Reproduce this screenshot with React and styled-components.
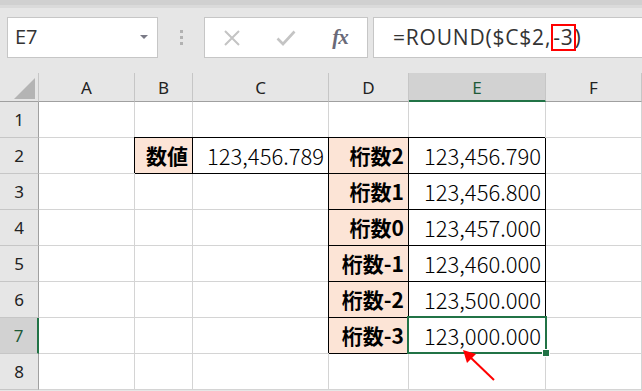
import React from "react";
import styled, { createGlobalStyle } from "styled-components";

const GlobalStyle = createGlobalStyle`
  html, body {
    margin: 0;
    padding: 0;
    background: #ffffff;
    overflow: hidden;
  }
`;

const COLS = ["A", "B", "C", "D", "E", "F"];
const WIDTHS = "39px 96px 58px 136px 80px 137px 1fr";

const rows = {
  2: { B: "数値", C: "123,456.789", D: "桁数2", E: "123,456.790" },
  3: { D: "桁数1", E: "123,456.800" },
  4: { D: "桁数0", E: "123,457.000" },
  5: { D: "桁数-1", E: "123,460.000" },
  6: { D: "桁数-2", E: "123,500.000" },
  7: { D: "桁数-3", E: "123,000.000" },
};

const labelCols = ["B", "D"];

const Page = styled.div`
  width: 642px;
  height: 391px;
  background: #e6e6e6;
  font-family: "Noto Sans", "Open Sans", sans-serif;
`;

const TopStrip = styled.div`
  height: 5px;
  background: #d0d0d0;
  border-bottom: 3px solid #dadada;
`;

const FormulaRow = styled.div`
  display: flex;
  align-items: flex-start;
  height: 65px;
  padding: 9px 0 0 7px;
  box-sizing: border-box;
`;

const NameBox = styled.div`
  width: 151px;
  height: 41px;
  box-sizing: border-box;
  background: #fff;
  border: 1px solid #c6c6c6;
  display: flex;
  align-items: center;
  justify-content: space-between;
  padding: 0 9px 2px 7px;
  font-family: "Open Sans", "Noto Sans", sans-serif;
  font-size: 20px;
  color: #333;
`;

const DropArrow = styled.span`
  width: 0;
  height: 0;
  border-left: 4px solid transparent;
  border-right: 4px solid transparent;
  border-top: 4px solid #7a7a86;
  margin-top: 1px;
`;

const Grip = styled.div`
  width: 46px;
  height: 41px;
  display: flex;
  flex-direction: column;
  align-items: center;
  justify-content: center;
  gap: 3px;
  span {
    width: 3px;
    height: 3px;
    background: #b2b2b2;
  }
`;

const ButtonBox = styled.div`
  width: 164px;
  height: 41px;
  box-sizing: border-box;
  background: #fff;
  border: 1px solid #c6c6c6;
  display: flex;
  align-items: center;
  padding-left: 0;
`;

const IconSlot = styled.div`
  width: 55px;
  display: flex;
  justify-content: center;
  align-items: center;
`;

const Fx = styled.span`
  font-family: "Liberation Serif", "DejaVu Serif", serif;
  font-style: italic;
  font-weight: bold;
  font-size: 21px;
  color: #6a6a78;
  letter-spacing: -1px;
`;

const FormulaBox = styled.div`
  flex: 1;
  height: 41px;
  margin-left: 5px;
  box-sizing: border-box;
  background: #fff;
  border: 1px solid #c6c6c6;
  border-right: none;
  display: flex;
  align-items: center;
  padding: 0 0 1px 19px;
  font-family: "Open Sans", "Noto Sans", sans-serif;
  font-size: 21px;
  color: #333;
  letter-spacing: 0.8px;
`;

const Mark = styled.span`
  display: inline-block;
  border: 2px solid #ff0000;
  line-height: 23px;
  padding: 0;
  margin: 0 -1px 0 0;
`;

const SheetWrap = styled.div`
  position: relative;
`;

const Sheet = styled.div`
  display: grid;
  grid-template-columns: ${WIDTHS};
  grid-template-rows: 29px repeat(8, 36px);
  background: #fff;
`;

const Corner = styled.div`
  background: #e6e6e6;
  border-right: 1px solid #c6c6c6;
  border-bottom: 1px solid #a0a0a0;
  display: flex;
  align-items: flex-end;
  justify-content: flex-end;
  padding: 0 3px 2px 0;
  svg {
    display: block;
  }
`;

const ColHead = styled.div`
  background: ${(p) => (p.$active ? "#d2d2d2" : "#e6e6e6")};
  border-right: 1px solid #c6c6c6;
  border-bottom: ${(p) => (p.$active ? "2px solid #217346" : "1px solid #a0a0a0")};
  display: flex;
  align-items: center;
  justify-content: center;
  font-size: 17px;
  color: ${(p) => (p.$active ? "#1e5a38" : "#222")};
  padding-top: ${(p) => (p.$active ? "1px" : "0")};
`;

const RowHead = styled.div`
  background: ${(p) => (p.$active ? "#d2d2d2" : "#e6e6e6")};
  border-right: ${(p) => (p.$active ? "2px solid #217346" : "1px solid #a0a0a0")};
  border-bottom: 1px solid #c6c6c6;
  display: flex;
  align-items: center;
  justify-content: center;
  font-size: 17px;
  color: ${(p) => (p.$active ? "#1e5a38" : "#222")};
`;

const Cell = styled.div`
  position: relative;
  z-index: ${(p) => (p.$selected ? 2 : "auto")};
  border-right: 1px solid ${(p) => (p.$boxed ? "#000" : "#d4d4d4")};
  border-bottom: 1px solid ${(p) => (p.$boxed ? "#000" : "#d4d4d4")};
  box-shadow: ${(p) => (p.$boxed ? "-1px -1px 0 #000" : "none")};
  background: ${(p) => (p.$label ? "#fce4d6" : "#fff")};
  display: flex;
  align-items: center;
  justify-content: flex-end;
  padding: 0 4px 1px 0;
  font-family: "Noto Sans CJK JP", "Noto Sans", sans-serif;
  font-size: ${(p) => (p.$label ? "21px" : "22px")};
  font-weight: ${(p) => (p.$label ? 700 : 300)};
  color: #000;
  white-space: nowrap;
`;

const Selection = styled.div`
  position: absolute;
  left: -2px;
  top: -2px;
  right: -2px;
  bottom: -1px;
  border: 2px solid #217346;
  pointer-events: none;
`;

const Handle = styled.div`
  position: absolute;
  right: -5px;
  bottom: -5px;
  width: 6px;
  height: 6px;
  background: #217346;
  border: 1px solid #fff;
`;

const Arrow = styled.svg`
  position: absolute;
  left: 455px;
  top: 269px;
  z-index: 3;
  overflow: visible;
`;

export default function App() {
  return (
    <Page>
      <GlobalStyle />
      <TopStrip />
      <FormulaRow>
        <NameBox>
          <span>E7</span>
          <DropArrow />
        </NameBox>
        <Grip>
          <span />
          <span />
          <span />
        </Grip>
        <ButtonBox>
          <IconSlot>
            <svg width="18" height="18" viewBox="0 0 18 18">
              <path d="M2 2 L16 16 M16 2 L2 16" stroke="#c4c4c4" strokeWidth="2" fill="none" />
            </svg>
          </IconSlot>
          <IconSlot>
            <svg width="20" height="16" viewBox="0 0 20 16">
              <path d="M1.5 8.5 L7 14 L18.5 1.5" stroke="#c4c4c4" strokeWidth="2.6" fill="none" />
            </svg>
          </IconSlot>
          <IconSlot>
            <Fx>fx</Fx>
          </IconSlot>
        </ButtonBox>
        <FormulaBox>
          =ROUND($C$2,<Mark>-3</Mark>)
        </FormulaBox>
      </FormulaRow>
      <SheetWrap>
        <Sheet>
          <Corner>
            <svg width="21" height="21" viewBox="0 0 21 21">
              <polygon points="21,0 21,21 0,21" fill="#b4b4b4" />
            </svg>
          </Corner>
          {COLS.map((c) => (
            <ColHead key={c} $active={c === "E"}>
              {c}
            </ColHead>
          ))}
          {[1, 2, 3, 4, 5, 6, 7, 8].map((r) => (
            <React.Fragment key={r}>
              <RowHead $active={r === 7}>{r}</RowHead>
              {COLS.map((c) => {
                const v = rows[r] && rows[r][c];
                const selected = r === 7 && c === "E";
                return (
                  <Cell
                    key={c}
                    $boxed={v !== undefined}
                    $label={v !== undefined && labelCols.includes(c)}
                    $selected={selected}
                  >
                    {v}
                    {selected && (
                      <Selection>
                        <Handle />
                      </Selection>
                    )}
                  </Cell>
                );
              })}
            </React.Fragment>
          ))}
        </Sheet>
        <Arrow width="40" height="40" viewBox="0 0 40 40">
          <line x1="39" y1="38" x2="14" y2="14" stroke="#ff0000" strokeWidth="2" />
          <polygon points="8,8 21,12 12,21" fill="#ff0000" />
        </Arrow>
      </SheetWrap>
    </Page>
  );
}
